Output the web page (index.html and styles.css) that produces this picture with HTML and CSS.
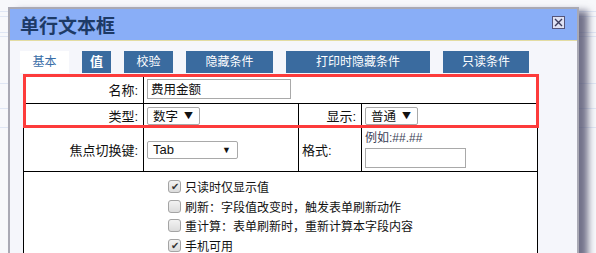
FILE: index.html
```html
<!DOCTYPE html>
<html lang="zh-CN">

<head>
    <meta charset="UTF-8">
    <meta name="viewport" content="width=device-width, initial-scale=1.0">
    <title>单行文本框</title>
    <link rel="stylesheet" href="styles.css">
</head>

<body>
    <div class="dialog">
        <div class="titlebar">
            <h1>单行文本框</h1>
            <span class="close">
                <svg width="13" height="13" viewBox="0 0 13 13">
                    <rect x="0.5" y="0.5" width="12" height="12" fill="#dfe2f4" stroke="#55557a"/>
                    <path d="M3 3 L10 10 M10 3 L3 10" stroke="#3c3c5c" stroke-width="1.4"/>
                </svg>
            </span>
        </div>
        <div class="content">
            <ul class="tabs">
                <li class="tab selected" style="width:49px">基本</li>
                <li class="tab big" style="width:29px">值</li>
                <li class="tab" style="width:49px">校验</li>
                <li class="tab" style="width:87px">隐藏条件</li>
                <li class="tab" style="width:144px">打印时隐藏条件</li>
                <li class="tab" style="width:86px">只读条件</li>
            </ul>
            <div class="formwrap">
                <table class="form">
                    <colgroup>
                        <col style="width:120px">
                        <col style="width:155px">
                        <col style="width:63px">
                        <col>
                    </colgroup>
                    <tr class="row1">
                        <td class="label">名称:</td>
                        <td colspan="3"><span class="input name">费用金额</span></td>
                    </tr>
                    <tr class="row2">
                        <td class="label">类型:</td>
                        <td><span class="select">数字<i>▼</i></span></td>
                        <td class="label">显示:</td>
                        <td><span class="select">普通<i>▼</i></span></td>
                    </tr>
                    <tr class="row3">
                        <td class="label">焦点切换键:</td>
                        <td><span class="select tabkey">Tab<i>▼</i></span></td>
                        <td class="label left">格式:</td>
                        <td class="fmt">
                            <div class="hint">例如:##.##</div>
                            <span class="input format"></span>
                        </td>
                    </tr>
                    <tr class="row4">
                        <td colspan="4" class="checks">
                            <div class="check"><span class="cb on">✔</span>只读时仅显示值</div>
                            <div class="check"><span class="cb"></span>刷新：字段值改变时，触发表单刷新动作</div>
                            <div class="check"><span class="cb"></span>重计算：表单刷新时，重新计算本字段内容</div>
                            <div class="check"><span class="cb on">✔</span>手机可用</div>
                        </td>
                    </tr>
                </table>
                <div class="highlight"></div>
            </div>
        </div>
    </div>
</body>

</html>
```

FILE: styles.css
```css
* {
    margin: 0;
    padding: 0;
    list-style-type: none;
    box-sizing: border-box;
}
html, body {
    width: 100%;
    height: 100%;
    overflow: hidden;
}
body {
    font-family: "Liberation Sans", "Noto Sans CJK SC", sans-serif;
    font-size: 13px;
    color: #111;
    background-color: #f7f8fb;
    background-image:
        linear-gradient(#dfe6f4, #dfe6f4),
        linear-gradient(#dfe6f4, #dfe6f4),
        linear-gradient(#dfe6f4, #dfe6f4),
        linear-gradient(#dfe6f4, #dfe6f4),
        linear-gradient(#dfe6f4, #dfe6f4),
        linear-gradient(#dfe6f4, #dfe6f4),
        linear-gradient(#dfe6f4, #dfe6f4);
    background-repeat: repeat-x;
    background-size: 100% 1px;
    background-position: 0 11px, 0 16px, 0 32px, 0 36px, 0 83px, 0 108px, 0 127px;
    padding: 7px 0 0 8px;
}
.dialog {
    width: 571px;
    height: 300px;
    border: 2px solid #a9a9b4;
    border-bottom: none;
    background-color: #f5f6fb;
    box-shadow: 9px 4px 7px rgba(70, 70, 100, 0.75);
}
.titlebar {
    height: 32px;
    background-color: #89aef7;
    border-bottom: 1px solid #e3dca2;
    display: flex;
    align-items: center;
    justify-content: space-between;
    padding: 0 12px 0 10px;
}
.titlebar h1 {
    font-family: "Noto Sans CJK SC", sans-serif;
    font-size: 19px;
    font-weight: bold;
    color: #1d3a66;
    line-height: 24px;
}
.close {
    display: flex;
    margin-top: -4px;
}
.content {
    padding: 10px 0 0 10px;
}
.tabs {
    display: flex;
    gap: 13px;
    height: 22px;
}
.tab {
    height: 22px;
    line-height: 22px;
    text-align: center;
    font-size: 12px;
    color: #fff;
    background-color: #3a6b9f;
}
.tab.big {
    font-size: 13px;
    font-weight: bold;
}
.tab.selected {
    background-color: #fff;
    color: #3a6ea8;
}
.formwrap {
    position: relative;
    margin: 1px 0 0 3px;
    width: 520px;
}
.form {
    border-collapse: collapse;
    table-layout: fixed;
    width: 515px;
    background-color: #fff;
}
.form td {
    border: 1px solid #000;
    vertical-align: middle;
    padding: 0 3px;
}
.form td.label {
    text-align: right;
    padding-right: 5px;
}
.form td.label.left {
    text-align: left;
    padding-left: 3px;
}
.row1 {
    height: 29px;
}
.row2 {
    height: 24px;
}
.row3 {
    height: 44px;
}
.input {
    display: block;
    height: 20px;
    line-height: 18px;
    border: 1px solid #a9a9a9;
    background-color: #fff;
    padding-left: 3px;
    font-family: "Noto Sans CJK SC", sans-serif;
    font-size: 12.5px;
}
.input.name {
    width: 144px;
}
.input.format {
    width: 101px;
}
.select {
    display: inline-flex;
    align-items: center;
    height: 18px;
    border: 1px solid #a9a9a9;
    border-radius: 2px;
    background-color: #fff;
    padding: 0 6px 0 5px;
    font-family: "Noto Sans CJK SC", sans-serif;
    font-size: 12.5px;
    line-height: 16px;
}
.select i {
    font-style: normal;
    font-size: 9px;
    margin-left: 6px;
}
.select.tabkey {
    width: 91px;
    justify-content: space-between;
    font-family: "Liberation Sans", sans-serif;
    font-size: 13px;
}
.fmt {
    vertical-align: top !important;
    padding-top: 3px !important;
}
.hint {
    color: #3c3f58;
    font-size: 12px;
    line-height: 14px;
    margin-bottom: 3px;
}
.checks {
    padding: 5px 0 0 144px !important;
    vertical-align: top !important;
}
.check {
    display: flex;
    align-items: center;
    height: 19.5px;
    font-size: 12px;
}
.cb {
    width: 13px;
    height: 13px;
    border: 1px solid #a4a4a4;
    border-radius: 3px;
    background: linear-gradient(#f2f2f2, #dcdcdc);
    margin-right: 4px;
    font-size: 10px;
    line-height: 11px;
    text-align: center;
    color: #333;
}
.highlight {
    position: absolute;
    left: 0;
    top: 0;
    width: 516px;
    height: 54px;
    border: 3px solid #fd3b3b;
    pointer-events: none;
}
```
